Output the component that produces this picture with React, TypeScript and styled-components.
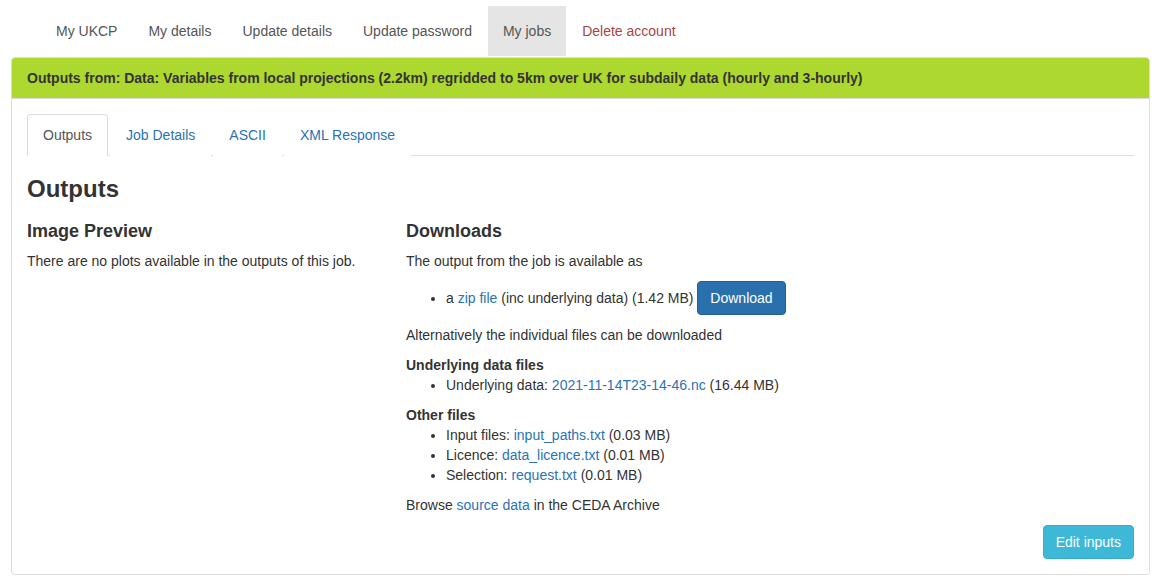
import styled, { createGlobalStyle } from "styled-components";

const GlobalStyle = createGlobalStyle`
  html, body {
    margin: 0;
    padding: 0;
    background: #fff;
  }
  body {
    font-family: "Liberation Sans", Arial, sans-serif;
    font-size: 14px;
    line-height: 20px;
    color: #333;
  }
  * { box-sizing: border-box; }
`;

const Page = styled.div`
  padding: 6px 12px 0 11px;
`;

const NavPills = styled.ul`
  display: flex;
  list-style: none;
  margin: 0;
  padding: 0 0 0 30px;
`;

const Pill = styled.li<{ active?: boolean; danger?: boolean }>`
  margin-left: 1px;
  &:first-child { margin-left: 0; }
  a {
    display: block;
    padding: 15px 15px;
    line-height: 20px;
    text-decoration: none;
    color: ${(p) => (p.danger ? "#a94442" : "#555")};
    background: ${(p) => (p.active ? "#e5e5e5" : "transparent")};
  }
`;

const Panel = styled.div`
  border: 1px solid #ddd;
  border-radius: 4px;
  margin-top: 1px;
  overflow: hidden;
`;

const PanelHeading = styled.div`
  background: #add82f;
  border-bottom: 1px solid #ddd;
  padding: 10px 15px;
  font-weight: bold;
  color: #333;
`;

const PanelBody = styled.div`
  padding: 15px;
`;

const Tabs = styled.ul`
  display: flex;
  list-style: none;
  margin: 0;
  padding: 0;
  border-bottom: 1px solid #ddd;
`;

const Tab = styled.li<{ active?: boolean }>`
  margin-right: 2px;
  margin-bottom: -1px;
  a {
    display: block;
    padding: 10px 15px;
    line-height: 20px;
    text-decoration: none;
    border: 1px solid ${(p) => (p.active ? "#ddd" : "transparent")};
    border-bottom-color: ${(p) => (p.active ? "#fff" : "transparent")};
    border-radius: 4px 4px 0 0;
    background: #fff;
    color: ${(p) => (p.active ? "#555" : "#2a73b5")};
  }
`;

const H3 = styled.h3`
  font-size: 24px;
  font-weight: 600;
  line-height: 1.1;
  margin: 20px 0 10px;
`;

const H4 = styled.h4`
  font-size: 18px;
  font-weight: 600;
  line-height: 1.1;
  margin: 10px 0 9px;
`;

const Row = styled.div`
  display: grid;
  grid-template-columns: 1fr 2fr;
  margin: 0 -15px;
  > div { padding: 0 15px; }
`;

const P = styled.p`
  margin: 0 0 10px;
`;

const Label = styled.div`
  font-weight: bold;
`;

const List = styled.ul`
  margin: 0 0 10px;
  padding-left: 40px;
`;

const A = styled.a`
  color: #2a73b5;
  text-decoration: none;
`;

const Button = styled.button<{ variant: "primary" | "info" }>`
  font-family: inherit;
  font-size: 14px;
  line-height: 20px;
  padding: 6px 12px;
  border-radius: 4px;
  color: #fff;
  cursor: pointer;
  background: ${(p) => (p.variant === "primary" ? "#2a70ad" : "#3db8d7")};
  border: 1px solid ${(p) => (p.variant === "primary" ? "#245f94" : "#36aecc")};
`;

const Footer = styled.div`
  display: flex;
  justify-content: flex-end;
`;

const navItems = ["My UKCP", "My details", "Update details", "Update password", "My jobs", "Delete account"];
const tabs = ["Outputs", "Job Details", "ASCII", "XML Response"];

const otherFiles = [
  { label: "Input files", file: "input_paths.txt", size: "0.03 MB" },
  { label: "Licence", file: "data_licence.txt", size: "0.01 MB" },
  { label: "Selection", file: "request.txt", size: "0.01 MB" },
];

export default function App() {
  return (
    <Page>
      <GlobalStyle />
      <NavPills>
        {navItems.map((item) => (
          <Pill key={item} active={item === "My jobs"} danger={item === "Delete account"}>
            <a href="#">{item}</a>
          </Pill>
        ))}
      </NavPills>
      <Panel>
        <PanelHeading>
          Outputs from: Data: Variables from local projections (2.2km) regridded to 5km over UK for subdaily data (hourly and 3-hourly)
        </PanelHeading>
        <PanelBody>
          <Tabs>
            {tabs.map((t) => (
              <Tab key={t} active={t === "Outputs"}>
                <a href="#">{t}</a>
              </Tab>
            ))}
          </Tabs>
          <H3>Outputs</H3>
          <Row>
            <div>
              <H4>Image Preview</H4>
              <P>There are no plots available in the outputs of this job.</P>
            </div>
            <div>
              <H4>Downloads</H4>
              <P>The output from the job is available as</P>
              <List>
                <li>
                  a <A href="#">zip file</A> (inc underlying data) (1.42 MB){" "}
                  <Button variant="primary">Download</Button>
                </li>
              </List>
              <P>Alternatively the individual files can be downloaded</P>
              <Label>Underlying data files</Label>
              <List>
                <li>
                  Underlying data: <A href="#">2021-11-14T23-14-46.nc</A> (16.44 MB)
                </li>
              </List>
              <Label>Other files</Label>
              <List>
                {otherFiles.map((f) => (
                  <li key={f.file}>
                    {f.label}: <A href="#">{f.file}</A> ({f.size})
                  </li>
                ))}
              </List>
              <P>
                Browse <A href="#">source data</A> in the CEDA Archive
              </P>
            </div>
          </Row>
          <Footer>
            <Button variant="info">Edit inputs</Button>
          </Footer>
        </PanelBody>
      </Panel>
    </Page>
  );
}
